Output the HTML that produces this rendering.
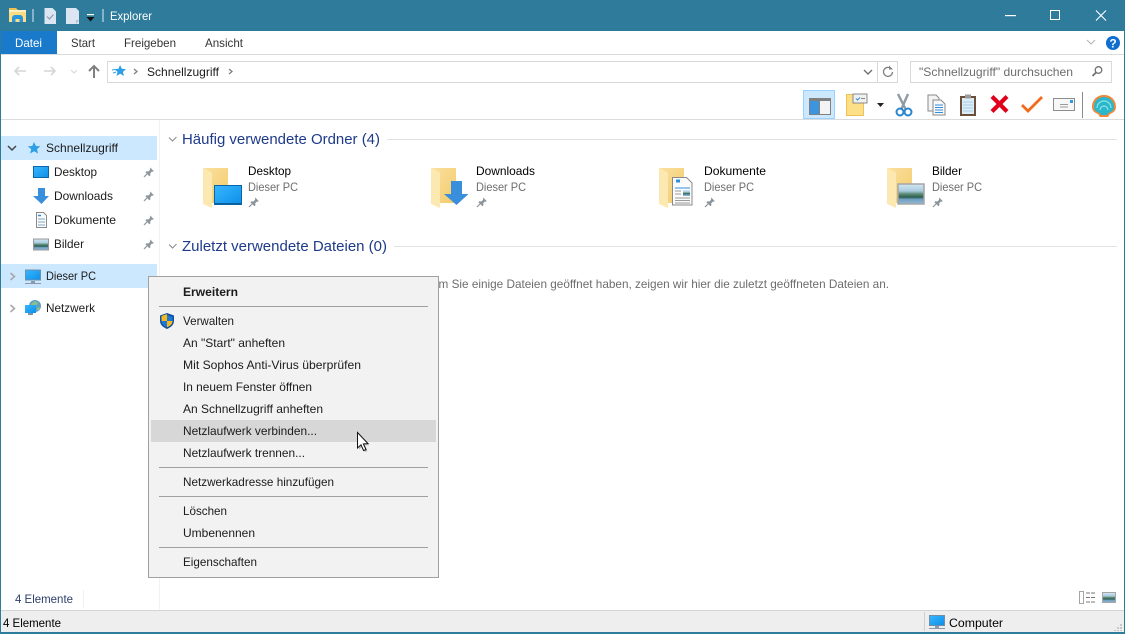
<!DOCTYPE html>
<html lang="de">
<head>
<meta charset="utf-8">
<title>Explorer</title>
<style>
html,body{margin:0;padding:0;width:1125px;height:634px;overflow:hidden;background:#fff}
svg{display:block;font-family:"Liberation Sans",sans-serif;font-size:12px}
.d{fill:#1b1b1b}
.g{fill:#6d6d6d}
.h{fill:#1e3a8a;font-size:15px}
</style>
</head>
<body>
<svg width="1125" height="634" viewBox="0 0 1125 634" xmlns="http://www.w3.org/2000/svg">
<defs>
<linearGradient id="fo" x1="0" x2="1" y1="0" y2="1"><stop offset="0" stop-color="#fbe0a0"/><stop offset="1" stop-color="#f2cb6a"/></linearGradient>
<linearGradient id="mon" x1="0" x2="1" y1="0" y2="1"><stop offset="0" stop-color="#38b6ff"/><stop offset="1" stop-color="#0d8fe8"/></linearGradient>
<linearGradient id="pic" x1="0" x2="0" y1="0" y2="1"><stop offset="0" stop-color="#d3e8f6"/><stop offset=".35" stop-color="#a9cbdc"/><stop offset=".5" stop-color="#5b8a76"/><stop offset=".66" stop-color="#2f5f50"/><stop offset=".76" stop-color="#6f9fc0"/><stop offset="1" stop-color="#93b8d6"/></linearGradient>
<g id="pin"><path d="M3 7L0 10" stroke="#8b949b" stroke-width="1.200" fill="none"/><path d="M6.200.5l3.600 3.600-1 .6-.8-.2-1.800 1.800.2 2-1 1-4-4 1-1 2 .2 1.800-1.800-.2-.8z" fill="#8b949b"/></g>
<g id="folder"><path d="M0 3H25V38H9V8z" fill="url(#fo)"/><path d="M0 3L9 8V43L0 39z" fill="#fce9b2"/></g>
</defs>

<!-- window frame -->
<rect width="1125" height="634" fill="#2e7b9b"/>
<rect x="1" y="31" width="1123" height="601" fill="#fff"/>

<!-- title bar icons -->
<path d="M9 10h17v12H9z" fill="#fcdd84"/><path d="M9 8h7l2 2H9z" fill="#f2c14e"/><rect x="9" y="10" width="17" height="2" fill="#fdf0c4"/>
<path d="M12 22V18a3 3 0 0 1 3-3h5a3 3 0 0 1 3 3V22h-3.500V19h-4V22z" fill="#2a97dc"/>
<rect x="32" y="9" width="2" height="13" fill="#84b4c8"/>
<path d="M44.500 8h8l3.500 3.500V24H44.500z" fill="#dbe6f2"/><path d="M47 16.500l2.500 2.500 4-4.500" stroke="#8d9db0" stroke-width="1.200" fill="none"/>
<path d="M66 8h10l3 3v13H66z" fill="#dbe6f2"/><path d="M79 20l-3 0v4z" fill="#aebfd0"/>
<rect x="87" y="14" width="7" height="1.200" fill="#fff"/><path d="M86.500 17h8l-4 4.500z" fill="#111"/>
<rect x="102" y="9" width="2" height="13" fill="#84b4c8"/>
<text x="110" y="20" fill="#fff" textLength="42" lengthAdjust="spacingAndGlyphs">Explorer</text>

<!-- window controls -->
<rect x="1005" y="15" width="11" height="1.200" fill="#fff"/>
<rect x="1050.500" y="10.500" width="9" height="9" fill="none" stroke="#fff"/>
<path d="M1096 10.500l10 10M1106 10.500l-10 10" stroke="#fff" stroke-width="1.100"/>

<!-- ribbon tabs -->
<rect x="1" y="31" width="56" height="23" fill="#1979ca"/>
<text x="15" y="47" fill="#fff" textLength="27" lengthAdjust="spacingAndGlyphs">Datei</text>
<text x="71" y="47" class="d" fill-opacity=".9" textLength="24" lengthAdjust="spacingAndGlyphs">Start</text>
<text x="124" y="47" class="d" fill-opacity=".9" textLength="52" lengthAdjust="spacingAndGlyphs">Freigeben</text>
<text x="205" y="47" class="d" fill-opacity=".9" textLength="38" lengthAdjust="spacingAndGlyphs">Ansicht</text>
<rect x="1" y="54" width="1123" height="1" fill="#dadbdc"/>
<path d="M1087 40l4 4 4-4" fill="none" stroke="#b5b5b5" stroke-width="1.100"/>
<circle cx="1113" cy="43" r="7" fill="#0f6fd0"/>
<text x="1113" y="47.500" fill="#fff" font-weight="bold" font-size="12" text-anchor="middle">?</text>

<!-- address row -->
<path d="M15 71h11M19 67l-4 4 4 4" fill="none" stroke="#d6d6d6" stroke-width="1.600"/>
<path d="M55 71H44M51 67l4 4-4 4" fill="none" stroke="#d6d6d6" stroke-width="1.600"/>
<path d="M71 70l3 3 3-3" fill="none" stroke="#d6d6d6" stroke-width="1"/>
<path d="M94 78V66M89 71l5-5 5 5" fill="none" stroke="#808080" stroke-width="2"/>
<rect x="107.500" y="61.500" width="770" height="21" fill="#fff" stroke="#d9d9d9"/>
<rect x="877.500" y="61.500" width="20" height="21" fill="#fff" stroke="#d9d9d9"/>
<path d="M120 65l1.800 3.800 4.200.3-3.100 2.800 1 4.100-3.700-2.200-3.700 2.200 1-4.100-3.100-2.800 4.200-.3z" fill="#2d9fe6"/>
<path d="M112 70l3-.5M113 73l3-1" stroke="#2d9fe6"/>
<path d="M134 69l3 2.500-3 2.500" fill="none" stroke="#808080" stroke-width="1.300"/>
<text x="147" y="76" class="d" textLength="72" lengthAdjust="spacingAndGlyphs">Schnellzugriff</text>
<path d="M229 69l3 2.500-3 2.500" fill="none" stroke="#808080" stroke-width="1.300"/>
<path d="M864 70l4 4 4-4" fill="none" stroke="#707070" stroke-width="1.400"/>
<path d="M891 68.500a4.500 4.500 0 1 0 1.500 3.500" fill="none" stroke="#808080" stroke-width="1.300"/><path d="M889 65.500v4h4z" fill="#808080"/>
<rect x="910.500" y="61.500" width="201" height="21" fill="#fff" stroke="#d9d9d9"/>
<text x="919" y="76" class="g" textLength="154" lengthAdjust="spacingAndGlyphs">"Schnellzugriff" durchsuchen</text>
<circle cx="1098.500" cy="70" r="3.300" fill="none" stroke="#707070" stroke-width="1.300"/><path d="M1096 72.500l-3.500 3.500" stroke="#707070" stroke-width="1.800"/>

<!-- toolbar -->
<rect x="803.500" y="90.500" width="31" height="28" fill="#cce8ff" stroke="#99d1ff"/>
<rect x="809" y="98" width="22" height="17" fill="#808080"/>
<rect x="810" y="101" width="9" height="13" fill="#3d95dd"/><rect x="820" y="101" width="10" height="13" fill="#f4f4f4"/>
<path d="M846.500 94.500h17v21h-17z" fill="#fcdf86" stroke="#ecc35a"/>
<rect x="853" y="94" width="14" height="9" fill="#f0f0f0" stroke="#8a8a8a"/>
<path d="M856 98.500l1.500 1.500 2.500-2.500" stroke="#2d8fe0" fill="none"/><rect x="861" y="98" width="4" height="1" fill="#888"/>
<path d="M877 103h7l-3.500 4z" fill="#222"/>
<path d="M898 94l8 16M908 94l-7 16" stroke="#8f9aa3" stroke-width="2.400"/>
<circle cx="900" cy="112" r="3.500" fill="none" stroke="#2a87cf" stroke-width="2"/><circle cx="908" cy="112" r="3.500" fill="none" stroke="#2a87cf" stroke-width="2"/>
<path d="M928 95h8l3 3v13h-11z" fill="#f4f4f4" stroke="#8a8a8a"/>
<path d="M933 100h8l4 4v11h-12z" fill="#f8f8f8" stroke="#8a8a8a"/>
<path d="M935 105h8M935 107.500h8M935 110h8M935 112.500h8" stroke="#2f8fdc"/>
<rect x="961" y="97" width="14" height="18" fill="#d9ecf8" stroke="#6b4f3a" stroke-width="2"/>
<rect x="965" y="94.500" width="6" height="4" fill="#9a9a9a"/>
<path d="M963 102h10M963 105h10M963 108h10M963 111h10" stroke="#a9cfe9"/>
<path d="M992 96.500l15 15M1007 96.500l-15 15" stroke="#e0001b" stroke-width="4.200"/>
<path d="M1022 105l6 6 14-14" fill="none" stroke="#f26a1b" stroke-width="2.800"/>
<rect x="1053.500" y="98.500" width="21" height="12" fill="#f7f7f7" stroke="#8d8d8d"/>
<rect x="1070" y="100" width="3" height="3" fill="#2f9ae6"/>
<path d="M1060 104.500h8M1060 107h8" stroke="#9a9a9a"/>
<rect x="1082" y="92" width="1" height="26" fill="#8a8a8a"/>
<path d="M1104 95C1097 95 1092 100 1092 107C1092 111 1095 113 1098 114L1100 117H1108L1110 114C1113 113 1116 111 1116 107C1116 100 1111 95 1104 95z" fill="#ee8a3c"/>
<path d="M1104 97C1098 97 1094 101 1094 107C1094 110 1096 112 1099 112.500L1101 115H1107L1109 112.500C1112 112 1114 110 1114 107C1114 101 1110 97 1104 97z" fill="#2bb6c9"/>
<path d="M1097 108a7 7 0 0 1 14 0M1100 110a4 4 0 0 1 8 0" fill="none" stroke="#8be4ea" stroke-width="1.200"/>
<rect x="1" y="119" width="1123" height="1" fill="#dadbdc"/>
<rect x="159" y="120" width="1" height="491" fill="#f2f2f2"/>

<!-- nav pane -->
<rect x="1" y="136" width="156" height="24" fill="#cce8ff"/>
<path d="M8 146l4 4 4-4" fill="none" stroke="#444" stroke-width="1.500"/>
<path d="M34 142l1.900 4 4.400.3-3.300 2.900 1 4.300-3.900-2.300-3.900 2.300 1-4.300-3.300-2.900 4.400-.3z" fill="#2d9fe6"/>
<text x="46" y="152" class="d" textLength="72" lengthAdjust="spacingAndGlyphs">Schnellzugriff</text>

<rect x="33.500" y="166.500" width="15" height="11" fill="url(#mon)" stroke="#0b66a8"/>
<text x="54" y="176" class="d" textLength="43" lengthAdjust="spacingAndGlyphs">Desktop</text>
<use href="#pin" x="144" y="167"/>
<path d="M38 188h7v8h4l-7.500 8L33 196h5z" fill="#3a8fdc"/>
<text x="54" y="200" class="d" textLength="59" lengthAdjust="spacingAndGlyphs">Downloads</text>
<use href="#pin" x="144" y="191"/>
<path d="M36.500 212.500h7l3 3v12h-10z" fill="#fbfbfb" stroke="#8a8a8a"/><path d="M38 219h7M38 222h7M38 225h7" stroke="#7aa8cc"/><path d="M38 215.500h3" stroke="#2f8fdc" stroke-width="1.500"/>
<text x="54" y="224" class="d" textLength="62" lengthAdjust="spacingAndGlyphs">Dokumente</text>
<use href="#pin" x="144" y="215"/>
<rect x="33.500" y="239" width="15" height="11" fill="url(#pic)" stroke="#999"/>
<text x="54" y="248" class="d" textLength="30" lengthAdjust="spacingAndGlyphs">Bilder</text>
<use href="#pin" x="144" y="239"/>

<rect x="1" y="264" width="156" height="24" fill="#cce8ff"/>
<path d="M10.500 273l4 3.500-4 3.500" fill="none" stroke="#a6a6a6" stroke-width="1.500"/>
<rect x="25.500" y="270" width="15" height="10" fill="url(#mon)" stroke="#6f8ea8"/>
<rect x="31" y="281" width="4" height="2" fill="#8a9aab"/><rect x="25" y="283" width="16" height="1" fill="#8a9aab"/>
<text x="46" y="280" class="d" textLength="50" lengthAdjust="spacingAndGlyphs">Dieser PC</text>

<path d="M10.500 305l4 3.500-4 3.500" fill="none" stroke="#a6a6a6" stroke-width="1.500"/>
<circle cx="35" cy="306" r="6" fill="#5f9fc4"/><path d="M31 304l4-3 3 2-2 3-3 1zM37 308l3-1-1 3-2 0z" fill="#8cc28a"/><rect x="25" y="305" width="11" height="8" fill="url(#mon)"/><rect x="28" y="313" width="5" height="2" fill="#7a94aa"/>
<text x="46" y="312" class="d" textLength="49" lengthAdjust="spacingAndGlyphs">Netzwerk</text>

<!-- content -->
<path d="M169 137.500l3.500 3.500 4-4" fill="none" stroke="#8a8a8a" stroke-width="1"/>
<text x="182" y="144" class="h" textLength="198" lengthAdjust="spacingAndGlyphs">Häufig verwendete Ordner (4)</text>
<rect x="387" y="139" width="730" height="1" fill="#e2e2e2"/>

<use href="#folder" x="203" y="165"/>
<rect x="214.500" y="185.500" width="27" height="19" fill="url(#mon)" stroke="#0b66a8"/>
<rect x="215" y="203" width="26" height="1.500" fill="#0b5f9c"/>
<text x="248" y="175" fill="#000" textLength="43" lengthAdjust="spacingAndGlyphs">Desktop</text>
<text x="248" y="191" class="g" textLength="50" lengthAdjust="spacingAndGlyphs">Dieser PC</text>
<use href="#pin" x="249" y="197"/>

<use href="#folder" x="431" y="165"/>
<path d="M451 181h11v13h6.500L456.500 205 444 194h7z" fill="#3a8fdc"/>
<text x="476" y="175" fill="#000" textLength="59" lengthAdjust="spacingAndGlyphs">Downloads</text>
<text x="476" y="191" class="g" textLength="50" lengthAdjust="spacingAndGlyphs">Dieser PC</text>
<use href="#pin" x="477" y="197"/>

<use href="#folder" x="659" y="165"/>
<path d="M672.500 177.500h14l5.500 5.500v22h-19.500z" fill="#fbfbfb" stroke="#8a8a8a"/>
<path d="M676 181h4" stroke="#2f8fdc" stroke-width="3"/><path d="M675 188h15" stroke="#2f8fdc"/><path d="M675 198h15M675 200.500h15M675 203h15" stroke="#9a9a9a"/><rect x="683" y="190" width="7" height="6" fill="url(#pic)"/><path d="M675 191h6M675 194h6" stroke="#9a9a9a"/>
<text x="704" y="175" fill="#000" textLength="62" lengthAdjust="spacingAndGlyphs">Dokumente</text>
<text x="704" y="191" class="g" textLength="50" lengthAdjust="spacingAndGlyphs">Dieser PC</text>
<use href="#pin" x="705" y="197"/>

<use href="#folder" x="887" y="165"/>
<rect x="898" y="184" width="26" height="20" fill="url(#pic)" stroke="#a5a5a5" stroke-width="1.500"/>
<text x="932" y="175" fill="#000" textLength="30" lengthAdjust="spacingAndGlyphs">Bilder</text>
<text x="932" y="191" class="g" textLength="50" lengthAdjust="spacingAndGlyphs">Dieser PC</text>
<use href="#pin" x="933" y="197"/>

<path d="M169 244.500l3.500 3.500 4-4" fill="none" stroke="#8a8a8a" stroke-width="1"/>
<text x="182" y="251" class="h" textLength="205" lengthAdjust="spacingAndGlyphs">Zuletzt verwendete Dateien (0)</text>
<rect x="394" y="246" width="723" height="1" fill="#e2e2e2"/>
<text x="398" y="288" class="g" textLength="491" lengthAdjust="spacingAndGlyphs">Nachdem Sie einige Dateien geöffnet haben, zeigen wir hier die zuletzt geöffneten Dateien an.</text>

<!-- bottom of content -->
<text x="15" y="603" fill="#2c3f6b" textLength="58" lengthAdjust="spacingAndGlyphs">4 Elemente</text>
<rect x="83" y="590" width="1" height="18" fill="#efefef"/>
<rect x="1079.500" y="591.500" width="4" height="12" fill="#fff" stroke="#a5a5a5"/>
<path d="M1086 593h4M1091 593h4M1086 597.500h4M1091 597.500h4M1086 602h4M1091 602h4" stroke="#777"/>
<rect x="1102.500" y="592.500" width="13" height="10" fill="url(#pic)" stroke="#a5a5a5"/>

<!-- status bar -->
<rect x="1" y="610" width="1123" height="1" fill="#d4d4d4"/>
<rect x="1" y="611" width="1123" height="21" fill="#eeeeee"/>
<text x="3" y="627" fill="#000" textLength="58" lengthAdjust="spacingAndGlyphs">4 Elemente</text>
<rect x="924" y="612" width="1" height="19" fill="#d0d0d0"/>
<rect x="929.500" y="615.500" width="15" height="10" fill="url(#mon)" stroke="#6f8ea8"/>
<rect x="935" y="626" width="4" height="2" fill="#8a9aab"/><rect x="929" y="628" width="16" height="1" fill="#8a9aab"/>
<text x="949" y="627" fill="#000" textLength="54" lengthAdjust="spacingAndGlyphs">Computer</text>
<path d="M1120 624h2v2h-2zM1117 627h2v2h-2zM1120 627h2v2h-2zM1114 630h2v1h-2zM1117 630h2v1h-2zM1120 630h2v1h-2z" fill="#c8c8c8"/>

<!-- context menu -->
<rect x="148.500" y="276.500" width="290" height="301" fill="#f2f2f2" stroke="#a0a0a0"/>
<rect x="151" y="420" width="285" height="22" fill="#d7d7d7"/>
<g class="d">
<text x="183" y="296" font-weight="bold" textLength="55" lengthAdjust="spacingAndGlyphs">Erweitern</text>
<text x="183" y="325" textLength="51" lengthAdjust="spacingAndGlyphs">Verwalten</text>
<text x="183" y="347" textLength="102" lengthAdjust="spacingAndGlyphs">An "Start" anheften</text>
<text x="183" y="369" textLength="178" lengthAdjust="spacingAndGlyphs">Mit Sophos Anti-Virus überprüfen</text>
<text x="183" y="391" textLength="129" lengthAdjust="spacingAndGlyphs">In neuem Fenster öffnen</text>
<text x="183" y="413" textLength="140" lengthAdjust="spacingAndGlyphs">An Schnellzugriff anheften</text>
<text x="183" y="435" textLength="134" lengthAdjust="spacingAndGlyphs">Netzlaufwerk verbinden...</text>
<text x="183" y="457" textLength="122" lengthAdjust="spacingAndGlyphs">Netzlaufwerk trennen...</text>
<text x="183" y="486" textLength="151" lengthAdjust="spacingAndGlyphs">Netzwerkadresse hinzufügen</text>
<text x="183" y="515" textLength="44" lengthAdjust="spacingAndGlyphs">Löschen</text>
<text x="183" y="537" textLength="72" lengthAdjust="spacingAndGlyphs">Umbenennen</text>
<text x="183" y="566" textLength="74" lengthAdjust="spacingAndGlyphs">Eigenschaften</text>
</g>
<rect x="159" y="306" width="269" height="1" fill="#a0a0a0"/>
<rect x="159" y="467" width="269" height="1" fill="#a0a0a0"/>
<rect x="159" y="496" width="269" height="1" fill="#a0a0a0"/>
<rect x="159" y="547" width="269" height="1" fill="#a0a0a0"/>
<path d="M167 313l7 2.500v5.500c0 4-3.500 6.500-7 8-3.500-1.500-7-4-7-8v-5.500z" fill="#12519e"/>
<path d="M167 315v6h5.500v.2c0 2.800-2.700 4.800-5.500 6v-6.200h-5.500v-5l5.500-2z" fill="#f5b81f"/>
<path d="M167 315l5.500 2v4H167zM161.500 321H167v6.200c-2.800-1.200-5.500-3.200-5.500-6z" fill="#1f78d1"/>

<!-- cursor -->
<path d="M359 434v15.500l3.500-3.200 2.600 5.800 2.400-1.100-2.600-5.600 4.600-.3z" fill="#000" fill-opacity=".25"/>
<path d="M357.500 432.500v15.500l3.500-3.200 2.600 5.800 2.400-1.100-2.600-5.600 4.600-.3z" fill="#fff" stroke="#111" stroke-width="1"/>
</svg>
</body>
</html>
